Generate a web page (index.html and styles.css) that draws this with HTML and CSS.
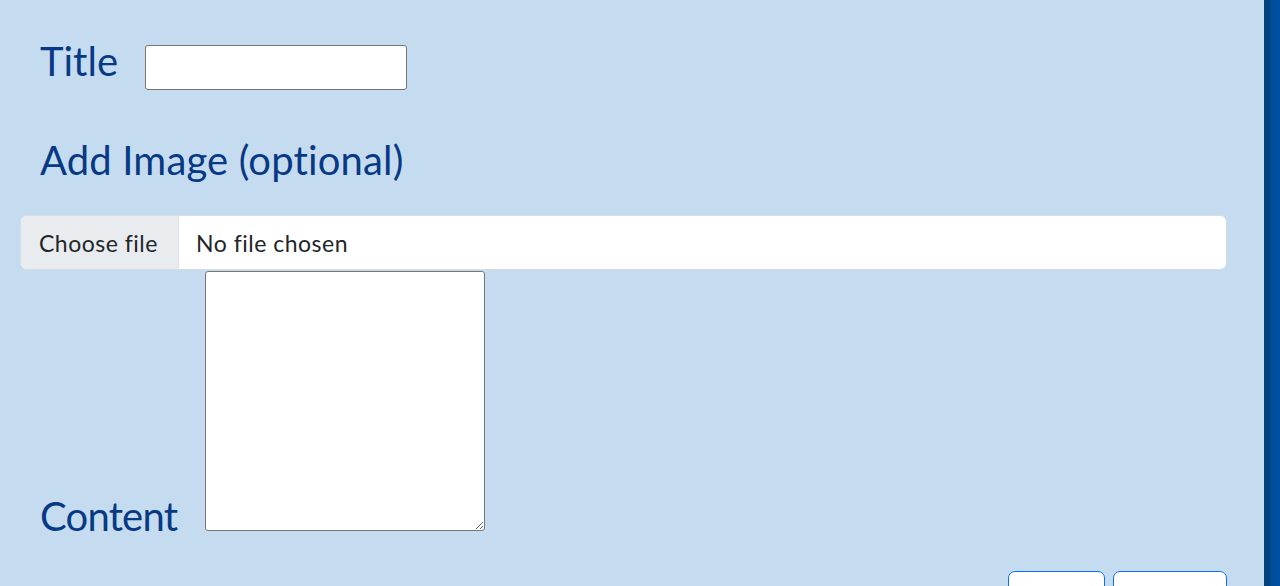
FILE: index.html
```html
<!DOCTYPE html>
<html lang="en">
<head>
<meta charset="utf-8">
<title>New Post</title>
<link rel="stylesheet" href="styles.css">
</head>
<body>
<div class="layout">
  <main class="main">
    <form class="post-form">
      <div class="row title-row">
        <label class="field-label title-label" for="title">Title</label>
        <input class="title-input" id="title" type="text">
      </div>
      <label class="field-label image-label" for="image">Add Image (optional)</label>
      <label class="file-input" for="image">
        <span class="file-btn">Choose file</span>
        <span class="file-name">No file chosen</span>
        <input class="file-native" id="image" type="file">
      </label>
      <div class="row content-row">
        <label class="field-label content-label" for="content">Content</label>
        <textarea class="content-input" id="content"></textarea>
      </div>
      <div class="actions">
        <button class="btn btn-cancel" type="button" aria-label="Cancel"></button>
        <button class="btn btn-submit" type="submit" aria-label="Submit"></button>
      </div>
    </form>
  </main>
  <aside class="side-strip"></aside>
</div>
</body>
</html>
```
FILE: styles.css
```css
html, body {
  margin: 0;
  padding: 0;
  height: 100%;
}
body {
  background: #c5dcf0;
  font-family: Lato, "Liberation Sans", sans-serif;
  overflow: hidden;
}
.layout {
  display: flex;
  height: 100vh;
  overflow: hidden;
}
.main {
  flex: 1;
  min-width: 0;
}
.side-strip {
  width: 16px;
  flex: none;
  background: linear-gradient(to right, #03417d 0, #03417d 6px, #004c98 6px, #0051a2 100%);
}
.post-form {
  display: flex;
  flex-direction: column;
  padding: 37px 37px 0 20px;
}
.field-label {
  display: block;
  color: #083984;
  font-size: 40px;
  line-height: 48px;
  padding-left: 20px;
}
.title-row {
  display: flex;
  align-items: flex-start;
}
.title-label {
  width: 125px;
  box-sizing: border-box;
}
.title-input {
  margin: 8px 0 0 0;
  width: 262px;
  height: 45px;
  box-sizing: border-box;
  border: 1px solid #767676;
  border-radius: 3px;
  background: #fff;
  padding: 1px 4px;
  font: 16px Lato, sans-serif;
}
.image-label {
  margin-top: 46px;
  letter-spacing: 0.15px;
}
.file-input {
  margin-top: 31px;
  display: flex;
  align-items: center;
  height: 55px;
  box-sizing: border-box;
  border: 1px solid #d6dce2;
  border-radius: 7px;
  background: #fff;
  overflow: hidden;
  font-size: 23px;
  letter-spacing: 0.5px;
  color: #212529;
  cursor: pointer;
}
.file-btn {
  align-self: stretch;
  display: flex;
  align-items: center;
  width: 158px;
  box-sizing: border-box;
  padding-left: 18px;
  background: #e9ecef;
  border-right: 1px solid #dee2e6;
}
.file-name {
  margin-left: 17px;
}
.file-native {
  display: none;
}
.content-row {
  margin-top: 1px;
  display: flex;
  align-items: flex-end;
}
.content-label {
  width: 185px;
  box-sizing: border-box;
  margin-bottom: -9px;
  letter-spacing: -0.8px;
}
.content-input {
  margin: 0;
  width: 280px;
  height: 260px;
  box-sizing: border-box;
  border: 1px solid #767676;
  border-radius: 3px;
  background: #fff;
  padding: 2px;
  resize: both;
  font: 16px Lato, sans-serif;
}
.actions {
  margin-top: 40px;
  display: flex;
  justify-content: flex-end;
  gap: 8px;
}
.btn {
  box-sizing: border-box;
  height: 56px;
  padding: 0;
  background: #fff;
  border: 1px solid #0d6efd;
  border-radius: 7px;
}
.btn-cancel {
  width: 97px;
}
.btn-submit {
  width: 114px;
}
```
